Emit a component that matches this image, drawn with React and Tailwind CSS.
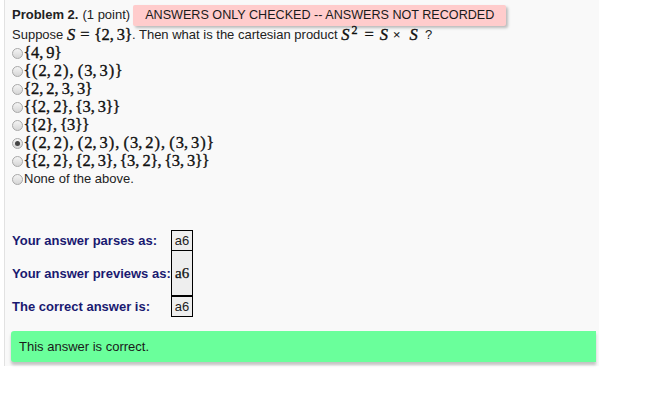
import React from "react";

const options = [
  { parts: ["{4", "9}"] },
  { parts: ["{(2", "2)", "(3", "3)}"] },
  { parts: ["{2", "2", "3", "3}"] },
  { parts: ["{{2", "2}", "{3", "3}}"] },
  { parts: ["{{2}", "{3}}"] },
  { parts: ["{(2", "2)", "(2", "3)", "(3", "2)", "(3", "3)}"], checked: true },
  { parts: ["{{2", "2}", "{2", "3}", "{3", "2}", "{3", "3}}"] },
  { text: "None of the above." },
];

const mathFont =
  "whitespace-nowrap shrink-0 font-['Liberation_Serif',serif] text-[16.5px] text-[#111] [-webkit-text-stroke:0.35px_#111]";

function Radio({ checked }) {
  return (
    <span className="inline-flex items-center justify-center w-[11px] h-[11px] rounded-full border border-[#a8a8a8] bg-gradient-to-b from-[#f4f4f4] to-[#d6d6d6] mr-[1px] shrink-0">
      {checked && <span className="w-[5px] h-[5px] rounded-full bg-[#444]" />}
    </span>
  );
}

// TeX-ish glyph widths: wider parens, narrower braces
function Glyphs({ text }) {
  return text.split("").map((c, i) => {
    if (c === "(" || c === ")")
      return (
        <span key={i} className="mx-[1px]">
          {c}
        </span>
      );
    if (c === "{" || c === "}")
      return (
        <span key={i} className="-mx-[0.5px]">
          {c}
        </span>
      );
    return <span key={i}>{c}</span>;
  });
}

function MathSet({ parts }) {
  return (
    <span className={mathFont}>
      {parts.map((p, i) => (
        <span key={i}>
          <Glyphs text={p} />
          {i < parts.length - 1 && <span className="mr-[3px]">,</span>}
        </span>
      ))}
    </span>
  );
}

export default function App() {
  const rows = [
    { label: "Your answer parses as:", h: "h-[21px]", tall: false },
    { label: "Your answer previews as:", h: "h-[45px]", tall: true },
    { label: "The correct answer is:", h: "h-[21px]", tall: false },
  ];

  return (
    <div className="w-[649px] h-[408px] bg-white font-['Liberation_Sans',Arial,sans-serif] text-[13px] text-[#222]">
      <div className="w-[595px] h-[366px] ml-[4px] bg-[#f9f9f9] border-l border-[#e2e2e2] pl-[7px] pt-[5px]">
        {/* Header */}
        <div className="flex items-center h-[20px] whitespace-nowrap">
          <span className="font-bold">Problem 2.</span>
          <span className="ml-[4px]">(1 point)</span>
          <span className="ml-[3px] h-[21px] px-[12px] flex items-center bg-[#ffcccc] text-[12.6px] text-[#1a1a1a] rounded-[2px] shadow-[2px_2px_3px_rgba(0,0,0,0.25)]">
            ANSWERS ONLY CHECKED -- ANSWERS NOT RECORDED
          </span>
        </div>

        {/* Question */}
        <div className="flex items-center h-[18px] mt-[1px] whitespace-nowrap">
          <span>Suppose&nbsp;</span>
          <span className={mathFont}>
            <i>S</i>
            <span className="mx-[5px]">=</span>
            <Glyphs text="{2," />
            <span className="ml-[3px]">
              <Glyphs text="3}" />
            </span>
          </span>
          <span>. Then what is the cartesian product&nbsp;</span>
          <span className={`${mathFont} flex items-center`}>
            <i>S</i>
            <span className="text-[12px] ml-[2px] relative -top-[5px]">2</span>
            <span className="ml-[7px] mr-[6px]">=</span>
            <i>S</i>
            <span className="text-[13px] ml-[5px] mr-[9px]">×</span>
            <i>S</i>
          </span>
          <span>&nbsp;&nbsp;?</span>
        </div>

        {/* Options */}
        <div className="flex flex-col">
          {options.map((o, i) => (
            <div key={i} className="flex items-center h-[18px] whitespace-nowrap">
              <Radio checked={o.checked} />
              {o.parts ? <MathSet parts={o.parts} /> : <span>{o.text}</span>}
            </div>
          ))}
        </div>

        {/* Results table */}
        <div className="mt-[42px] flex flex-col w-[181px]">
          {rows.map((r, i) => (
            <div key={i} className={`flex items-center ${r.h}`}>
              <span className="w-[160px] font-bold text-[13px] text-[#191970]">{r.label}</span>
              <span
                className={`w-[22px] h-full flex items-center justify-center bg-[#eeeeee] border-x border-black ${
                  i === 0 ? "border-t" : ""
                } ${i === 2 ? "border-y" : "border-b"}`}
              >
                <span
                  className={
                    r.tall
                      ? "font-['Liberation_Serif',serif] text-[15px] text-[#111] [-webkit-text-stroke:0.25px_#111]"
                      : "text-[13px]"
                  }
                >
                  a6
                </span>
              </span>
            </div>
          ))}
        </div>

        {/* Correct message */}
        <div className="mt-[14px] h-[31px] w-[585px] -ml-[1px] flex items-center pl-[8px] bg-[#6aff9b] rounded-l-[3px] shadow-[0_3px_3px_rgba(0,0,0,0.22)] text-[13px] text-[#1a1a1a]">
          This answer is correct.
        </div>
      </div>
    </div>
  );
}
